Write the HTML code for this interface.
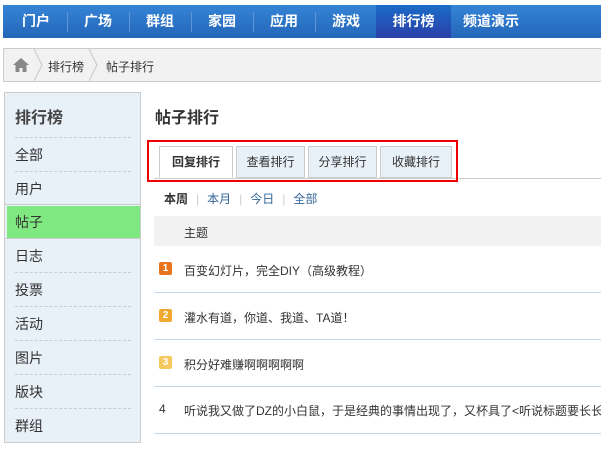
<!DOCTYPE html><html><head><meta charset="utf-8"><style>
*{margin:0;padding:0;box-sizing:border-box}
body{width:601px;height:449px;overflow:hidden;background:#fff;font-family:"Liberation Sans","Noto Sans CJK SC",sans-serif;font-size:12px;color:#333;position:relative}
.a{position:absolute}
#nav{left:3px;top:5px;width:598px;height:33px;background:linear-gradient(#3584d6,#2466b8);}
#nav span{position:absolute;top:0;height:33px;line-height:33px;color:#fff;font-size:14px;font-weight:bold;text-align:center;width:62px}
#nav i{position:absolute;top:7px;width:1px;height:20px;background:#5d97d6}
#bc{left:3px;top:48px;width:598px;height:34px;background:#f2f2f2;border:1px solid #ccc;border-right:0}
#side{left:4px;top:92px;width:137px;height:351px;background:#e8f0f8;border:1px solid #ccc}
.it{position:absolute;left:10px;font-size:14px;color:#333}
.dl{position:absolute;left:10px;width:116px;border-top:1px dashed #ccc}
.sl{position:absolute;left:0;width:135px;border-top:1px solid #ccc}
.tab{position:absolute;top:146px;height:32px;line-height:30px;text-align:center;border:1px solid #ccc;background:#e8f0f8;font-size:12px}
.row{position:absolute;left:154px;width:447px;border-bottom:1px solid #c6d6e4}
.bd{position:absolute;left:159px;width:13px;height:13px;color:#fff;font-size:10px;font-weight:bold;line-height:13px;text-align:center;border-radius:2px}
.tt{position:absolute;left:184px;font-size:12px;white-space:nowrap}
</style></head><body>
<div id="nav" class="a">
<span style="left:2px">门户</span><i style="left:64px"></i>
<span style="left:64px">广场</span><i style="left:126px"></i>
<span style="left:126px">群组</span><i style="left:188px"></i>
<span style="left:188px">家园</span><i style="left:250px"></i>
<span style="left:250px">应用</span><i style="left:312px"></i>
<span style="left:312px">游戏</span>
<span style="left:373px;width:75px;background:linear-gradient(#1a6cc8,#2a3fa8)">排行榜</span>
<span style="left:448px;width:150px;text-align:left;padding-left:12px">频道演示</span>
</div>
<div id="bc" class="a">
<svg class="a" style="left:8px;top:8px" width="18" height="16" viewBox="0 0 18 16"><path d="M9 1L1 8h2.5v7h4v-4h3v4h4V8H17z" fill="#888"/></svg>
<svg class="a" style="left:30px;top:0" width="10" height="32"><path d="M0 0L8 16L0 32" stroke="#c8c8c8" fill="none"/></svg>
<span class="a" style="left:44px;top:9px">排行榜</span>
<svg class="a" style="left:85px;top:0" width="10" height="32"><path d="M0 0L8 16L0 32" stroke="#c8c8c8" fill="none"/></svg>
<span class="a" style="left:102px;top:9px">帖子排行</span>
</div>
<div id="side" class="a">
<div class="it" style="top:11px;font-size:16px;font-weight:bold;color:#444">排行榜</div>
<div class="dl" style="top:44px"></div>
<div class="it" style="top:52px">全部</div>
<div class="dl" style="top:78px"></div>
<div class="it" style="top:86px">用户</div>
<div class="sl" style="top:111px"></div>
<div class="a" style="left:2px;top:113px;width:133px;height:32px;background:#80e880"></div>
<div class="it" style="top:119px">帖子</div>
<div class="sl" style="top:145px"></div>
<div class="it" style="top:153px">日志</div>
<div class="dl" style="top:179px"></div>
<div class="it" style="top:187px">投票</div>
<div class="dl" style="top:213px"></div>
<div class="it" style="top:221px">活动</div>
<div class="dl" style="top:247px"></div>
<div class="it" style="top:255px">图片</div>
<div class="dl" style="top:281px"></div>
<div class="it" style="top:289px">版块</div>
<div class="dl" style="top:315px"></div>
<div class="it" style="top:323px">群组</div>
</div>
<div class="a" style="left:155px;top:104px;font-size:16px;font-weight:bold;color:#333">帖子排行</div>
<div class="a" style="left:154px;top:178px;width:447px;border-top:1px solid #ccc"></div>
<div class="tab" style="left:159px;width:74px;background:#fff;border-bottom-color:#fff;font-weight:bold">回复排行</div>
<div class="tab" style="left:236px;width:69px">查看排行</div>
<div class="tab" style="left:308px;width:69px">分享排行</div>
<div class="tab" style="left:380px;width:72px">收藏排行</div>
<div class="a" style="left:147px;top:140px;width:311px;height:42px;border:2px solid #e00"></div>
<div class="a" style="left:164px;top:190px;white-space:nowrap"><b>本周</b><span style="color:#ccc;margin:0 8px">|</span><span style="color:#369">本月</span><span style="color:#ccc;margin:0 8px">|</span><span style="color:#369">今日</span><span style="color:#ccc;margin:0 8px">|</span><span style="color:#369">全部</span></div>
<div class="a" style="left:154px;top:216px;width:447px;height:30px;background:#f2f2f2"></div>
<div class="a" style="left:184px;top:224px">主题</div>
<div class="row" style="top:246px;height:47px"></div>
<div class="row" style="top:293px;height:47px"></div>
<div class="row" style="top:340px;height:47px"></div>
<div class="row" style="top:387px;height:47px"></div>
<div class="bd" style="top:262px;background:#e8741e">1</div><div class="tt" style="top:262px">百变幻灯片，完全DIY（高级教程）</div>
<div class="bd" style="top:309px;background:#f0a830">2</div><div class="tt" style="top:309px">灌水有道，你道、我道、TA道！</div>
<div class="bd" style="top:356px;background:#f5c860">3</div><div class="tt" style="top:356px">积分好难赚啊啊啊啊啊</div>
<div class="a" style="left:159px;top:402px">4</div><div class="tt" style="top:402px">听说我又做了DZ的小白鼠，于是经典的事情出现了，又杯具了&lt;听说标题要长长长长</div>
</body></html>
